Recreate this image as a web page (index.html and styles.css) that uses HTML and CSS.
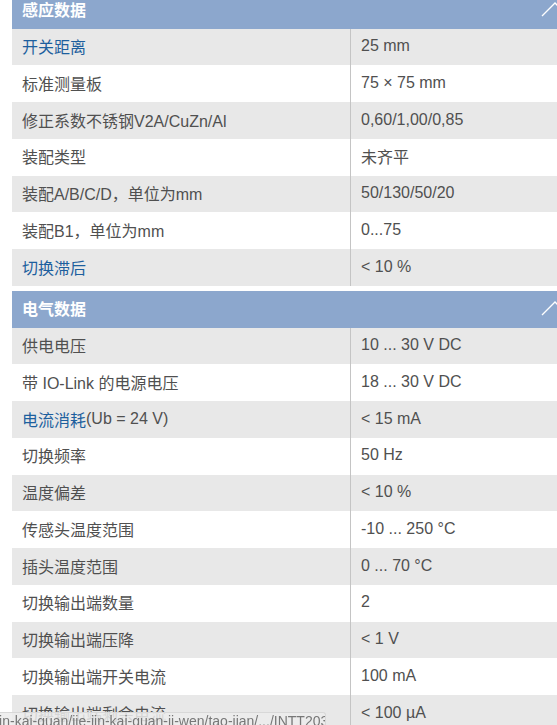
FILE: index.html
```html
<!DOCTYPE html>
<html lang="zh">
<head>
<meta charset="utf-8">
<link rel="stylesheet" href="styles.css">
</head>
<body>
<div class="page">
  <section class="sect">
    <div class="head"><span>感应数据</span><svg class="chev" width="28" height="15" viewBox="0 0 28 15"><polyline points="1,14 14,1 27,14" fill="none" stroke="#fff" stroke-width="1.4"/></svg></div>
    <div class="row"><div class="k link">开关距离</div><div class="v">25 mm</div></div>
    <div class="row"><div class="k">标准测量板</div><div class="v">75 × 75 mm</div></div>
    <div class="row"><div class="k">修正系数不锈钢V2A/CuZn/Al</div><div class="v">0,60/1,00/0,85</div></div>
    <div class="row"><div class="k">装配类型</div><div class="v">未齐平</div></div>
    <div class="row"><div class="k">装配A/B/C/D，单位为mm</div><div class="v">50/130/50/20</div></div>
    <div class="row"><div class="k">装配B1，单位为mm</div><div class="v">0...75</div></div>
    <div class="row"><div class="k link">切换滞后</div><div class="v">&lt; 10 %</div></div>
  </section>
  <section class="sect">
    <div class="head"><span>电气数据</span><svg class="chev" width="28" height="15" viewBox="0 0 28 15"><polyline points="1,14 14,1 27,14" fill="none" stroke="#fff" stroke-width="1.4"/></svg></div>
    <div class="row"><div class="k">供电电压</div><div class="v">10 ... 30 V DC</div></div>
    <div class="row"><div class="k">带 IO-Link 的电源电压</div><div class="v">18 ... 30 V DC</div></div>
    <div class="row"><div class="k"><span class="link">电流消耗</span>(Ub = 24 V)</div><div class="v">&lt; 15 mA</div></div>
    <div class="row"><div class="k">切换频率</div><div class="v">50 Hz</div></div>
    <div class="row"><div class="k">温度偏差</div><div class="v">&lt; 10 %</div></div>
    <div class="row"><div class="k">传感头温度范围</div><div class="v">-10 ... 250 °C</div></div>
    <div class="row"><div class="k">插头温度范围</div><div class="v">0 ... 70 °C</div></div>
    <div class="row"><div class="k">切换输出端数量</div><div class="v">2</div></div>
    <div class="row"><div class="k">切换输出端压降</div><div class="v">&lt; 1 V</div></div>
    <div class="row"><div class="k">切换输出端开关电流</div><div class="v">100 mA</div></div>
    <div class="row"><div class="k">切换输出端剩余电流</div><div class="v">&lt; 100 µA</div></div>
  </section>
</div>
<div class="status">jin-kai-guan/jie-jin-kai-guan-ji-wen/tao-jian/.../INTT203</div>
</body>
</html>
```
FILE: styles.css
```css
html, body {
  margin: 0;
  padding: 0;
  background: #fff;
  overflow: hidden;
  height: 725px;
}
body {
  font-family: "Liberation Sans", "Noto Sans CJK SC", sans-serif;
  font-size: 16px;
  color: #505050;
}
.page {
  margin: -8.3px 0 0 12px;
  width: 557px;
  display: flex;
  flex-direction: column;
  gap: 4.75px;
}
.sect {
  display: flex;
  flex-direction: column;
}
.head {
  height: 37px;
  background: #8ca7cd;
  color: #fff;
  font-weight: bold;
  display: flex;
  align-items: center;
  justify-content: space-between;
  padding: 0 0 2px 10px;
  box-sizing: border-box;
}
.chev {
  display: block;
}
.row {
  height: 36.75px;
  display: grid;
  grid-template-columns: 338px 1fr;
}
.sect .row:nth-child(even) {
  background: #e8e8e8;
}
.k,
.v {
  display: flex;
  align-items: center;
  padding-left: 10px;
  padding-bottom: 2px;
  white-space: nowrap;
  box-sizing: border-box;
}
.v {
  border-left: 1px solid #c4c4c4;
}
.link {
  color: #1d5f9e;
}
.status {
  position: fixed;
  left: 0;
  bottom: 0;
  width: 326px;
  height: 13px;
  box-sizing: border-box;
  background: rgba(236, 236, 236, 0.85);
  border: 1px solid #d8d8d8;
  border-left: none;
  border-bottom: none;
  border-radius: 0 3px 0 0;
  font-size: 14px;
  line-height: 17px;
  color: #777;
  white-space: nowrap;
  overflow: hidden;
  text-indent: -4px;
}
```
